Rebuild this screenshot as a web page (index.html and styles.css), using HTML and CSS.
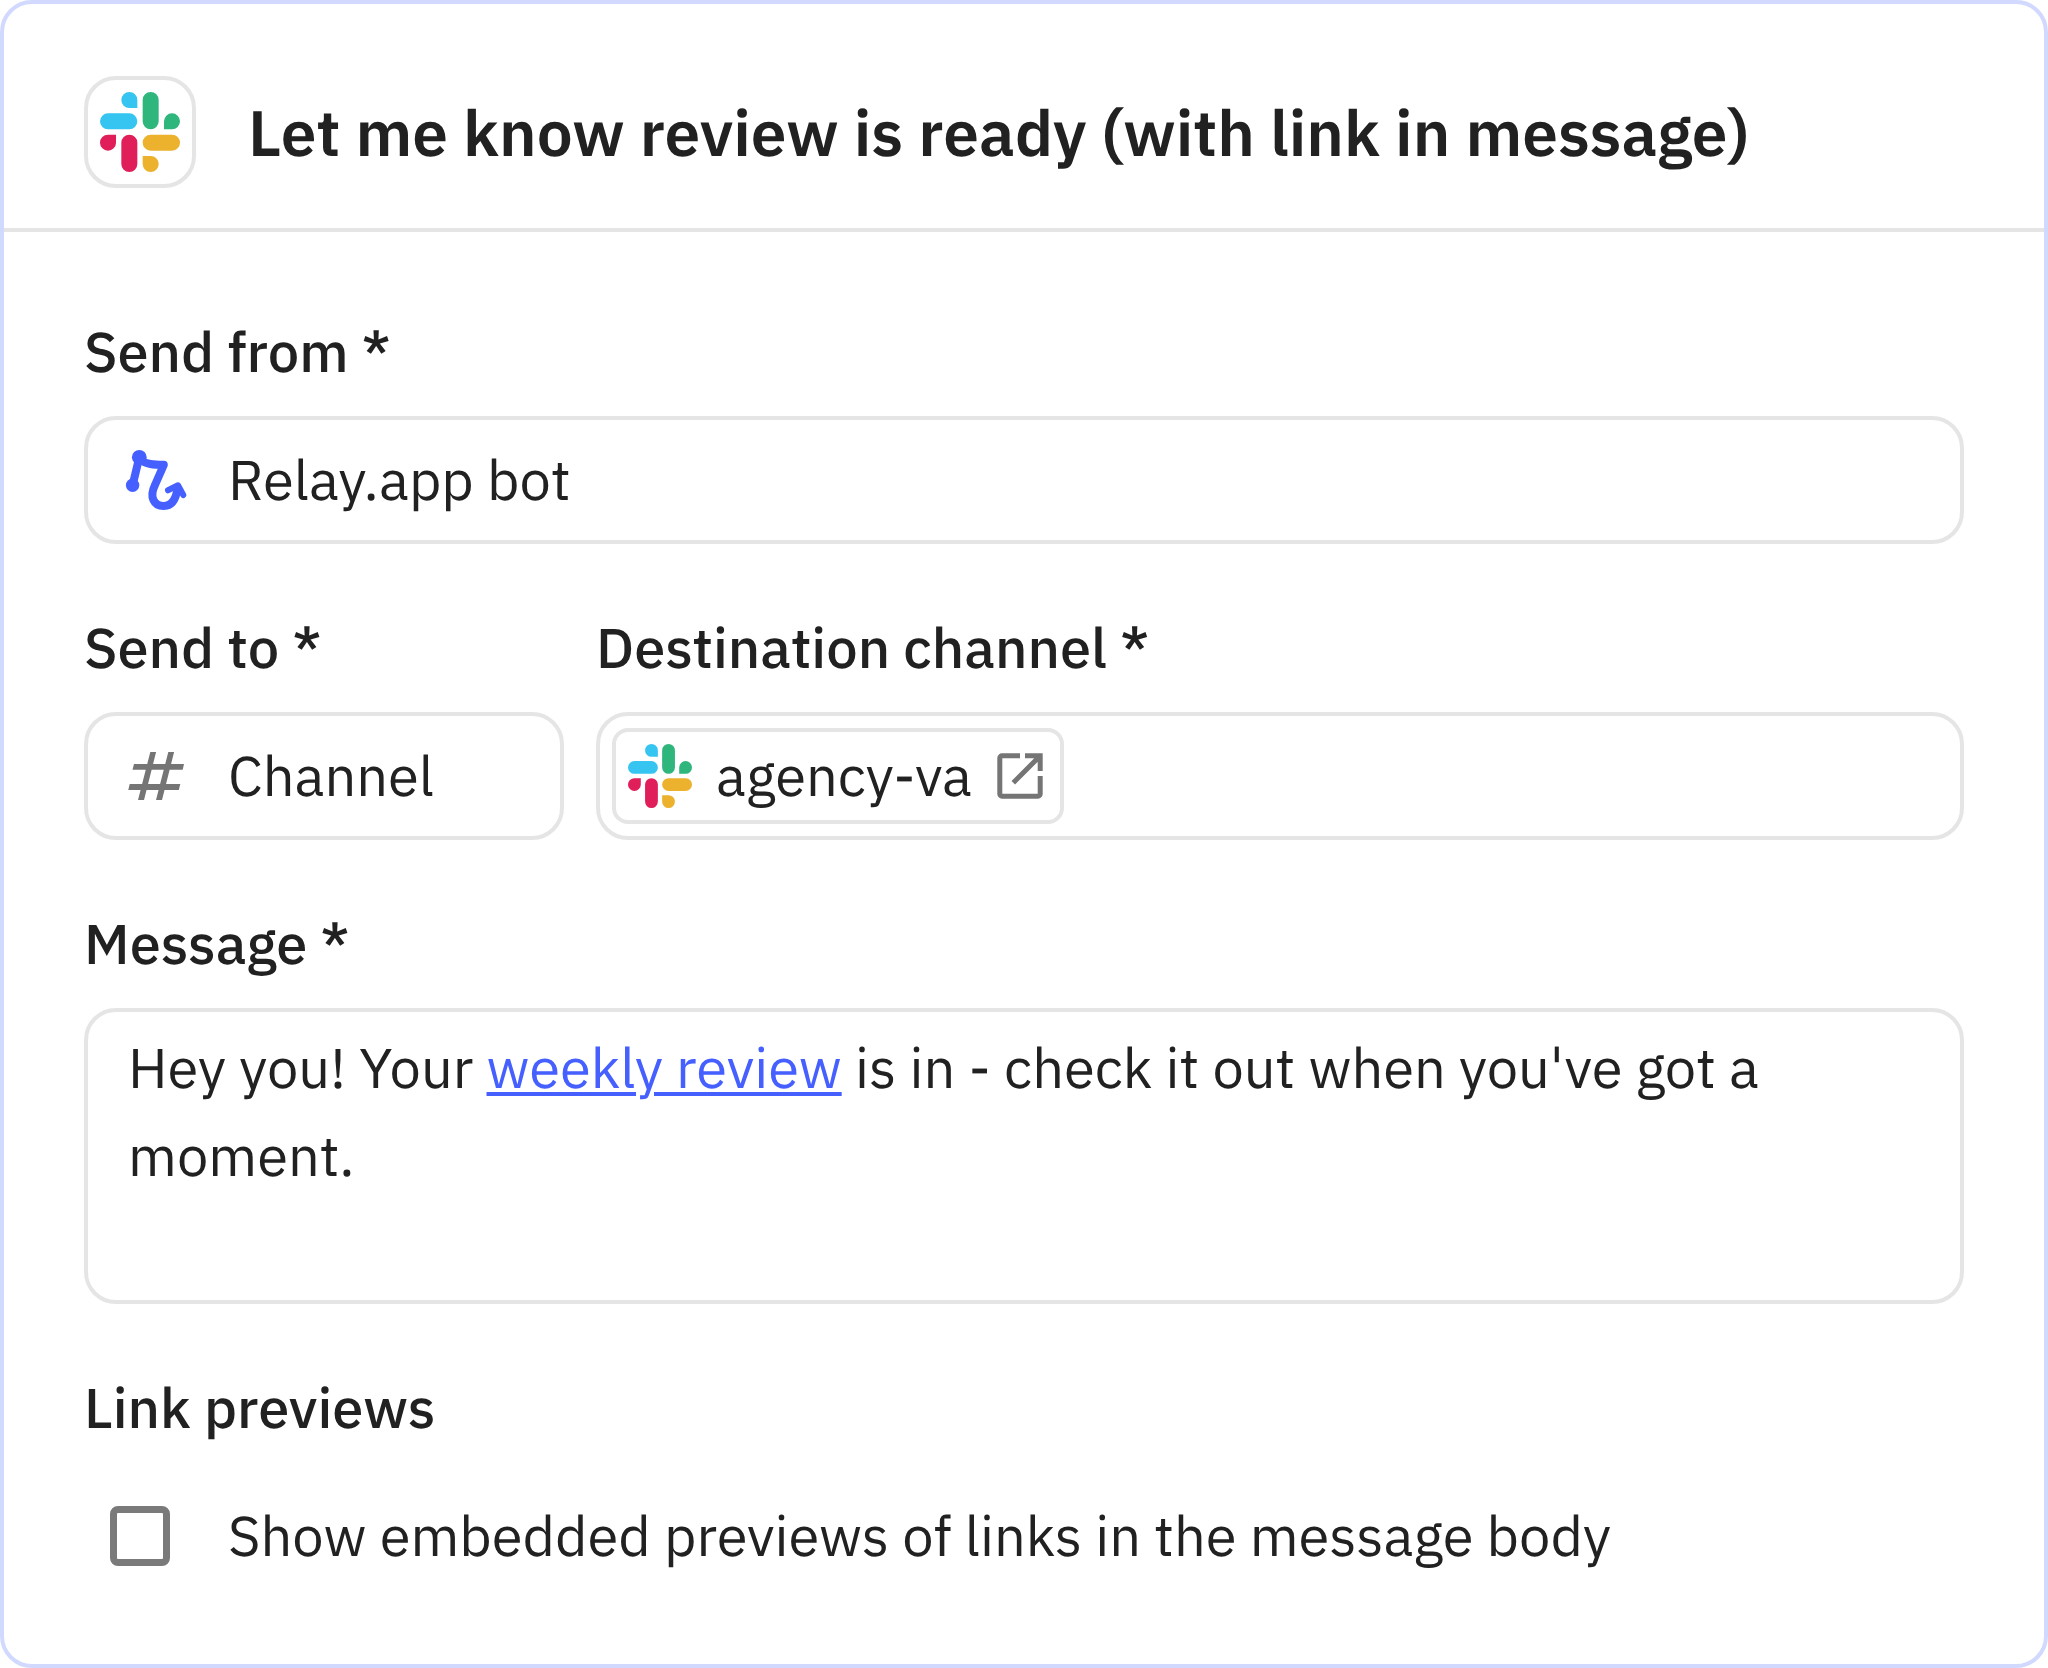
FILE: index.html
```html
<!DOCTYPE html>
<html lang="en">
<head>
    <meta charset="UTF-8">
    <meta name="viewport" content="width=device-width, initial-scale=1.0">
    <title>Let me know review is ready</title>
    <link rel="stylesheet" href="styles.css">
</head>
<body>

    <!-- Slack mark, shared by the header and the channel chip -->
    <svg class="sprite" aria-hidden="true">
        <symbol id="slack" viewBox="0 0 60 60">
            <path fill="#36c5f0" d="M28 12h-6a6 6 0 1 1 6-6zM6 16h16a6 6 0 0 1 0 12H6a6 6 0 0 1 0-12z"/>
            <path fill="#2eb67d" d="M48 28v-6a6 6 0 1 1 6 6zM44 6v16a6 6 0 0 1-12 0V6a6 6 0 0 1 12 0z"/>
            <path fill="#ecb22e" d="M32 48h6a6 6 0 1 1-6 6zM54 44H38a6 6 0 0 1 0-12h16a6 6 0 0 1 0 12z"/>
            <path fill="#e01e5a" d="M12 32v6a6 6 0 1 1-6-6zM16 54V38a6 6 0 0 1 12 0v16a6 6 0 0 1-12 0z"/>
        </symbol>
    </svg>

    <form class="card">
        <header class="card-header">
            <div class="app-icon">
                <svg class="app-logo"><use href="#slack"/></svg>
            </div>
            <h1>Let me know review is ready (with link in message)</h1>
        </header>

        <div class="card-body">
            <div class="field">
                <label for="send-from">Send from *</label>
                <div class="control">
                    <svg class="icon" viewBox="0 0 64 64" fill="none" stroke="#4560ff" stroke-width="8" stroke-linecap="round" stroke-linejoin="round" aria-hidden="true">
                        <circle cx="15.3" cy="9.3" r="7.4" fill="#4560ff" stroke="none"/>
                        <circle cx="8.6" cy="37.3" r="6.7" fill="#4560ff" stroke="none"/>
                        <path d="M15.3 9.3 8.6 37.3"/>
                        <path d="M15.3 11C22 16.500 30 16.800 39.800 16.800L31 37C25 49 30 58 39.500 58C47 58 52 52 53.500 40"/>
                        <path stroke-width="6" d="M44 42.300 54 37.300 59.300 47"/>
                    </svg>
                    <select id="send-from">
                        <option>Relay.app bot</option>
                    </select>
                </div>
            </div>

            <div class="field-row">
                <div class="field field-type">
                    <label for="send-to">Send to *</label>
                    <div class="control">
                        <svg class="icon" viewBox="0 0 64 64" fill="#757575" aria-hidden="true">
                            <path d="M10 20h50l-1.300 5.800H8.500zM5.700 40h50.600l-1.500 6H4.300zM26.300 8h5.800L20 56h-6zM44.300 8h5.800L38 56h-6z"/>
                        </svg>
                        <select id="send-to">
                            <option>Channel</option>
                        </select>
                    </div>
                </div>

                <div class="field field-channel" role="group" aria-labelledby="channel-label">
                    <span class="label" id="channel-label">Destination channel *</span>
                    <div class="control control-chips">
                        <a class="chip" href="#">
                            <svg class="icon"><use href="#slack"/></svg>
                            <span>agency-va</span>
                            <svg class="icon-open" viewBox="0 0 60 60" fill="none" stroke="#757575" stroke-width="5" aria-hidden="true">
                                <path d="M30 9.800H12a2.200 2.200 0 0 0-2.200 2.200V48a2.200 2.200 0 0 0 2.200 2.200H48a2.200 2.200 0 0 0 2.200-2.200V30"/>
                                <path d="M35 9.800H50.200V25M23.300 36.700 50.200 9.800"/>
                            </svg>
                        </a>
                    </div>
                </div>
            </div>

            <div class="field">
                <span class="label" id="message-label">Message *</span>
                <div class="message" role="textbox" aria-multiline="true" aria-labelledby="message-label" contenteditable="true" spellcheck="false">Hey you! Your <a href="#">weekly review</a> is in - check it out when you've got a moment.</div>
            </div>

            <div class="field">
                <span class="label">Link previews</span>
                <div class="check-row">
                    <input type="checkbox" id="previews">
                    <label for="previews">Show embedded previews of links in the message body</label>
                </div>
            </div>
        </div>
    </form>

</body>
</html>
```
FILE: styles.css
```css
* {
    margin: 0;
    padding: 0;
    box-sizing: border-box;
}

body {
    background: #ffffff;
    color: #212121;
    font-family: 'IBM Plex Sans', 'Noto Sans', sans-serif;
    font-size: 56px;
    line-height: 88px;
    text-rendering: geometricPrecision;
}

.sprite {
    display: none;
}

.card {
    border: 4px solid #d1d9ff;
    border-radius: 32px;
}

/* Header */
.card-header {
    display: flex;
    align-items: center;
    gap: 52px;
    padding: 72px 80px 40px;
    border-bottom: 4px solid #e5e5e5;
}

.app-icon {
    display: flex;
    align-items: center;
    justify-content: center;
    width: 112px;
    height: 112px;
    border: 4px solid #e5e5e5;
    border-radius: 32px;
}

.app-logo {
    width: 80px;
    height: 80px;
}

h1 {
    font-size: 64px;
    font-weight: 600;
}

/* Fields */
.card-body {
    display: flex;
    flex-direction: column;
    gap: 64px;
    padding: 80px 80px 64px;
}

.field {
    display: flex;
    flex-direction: column;
    gap: 24px;
}

.field > label,
.label {
    font-weight: 500;
    line-height: 80px;
}

.field-row {
    display: flex;
    gap: 32px;
}

.field-type {
    width: 480px;
}

.field-channel {
    flex: 1;
}

.control {
    display: flex;
    align-items: center;
    gap: 40px;
    height: 128px;
    padding: 0 36px;
    border: 4px solid #e5e5e5;
    border-radius: 32px;
}

.control select {
    flex: 1;
    min-width: 0;
    appearance: none;
    border: none;
    outline: none;
    background: transparent;
    color: inherit;
    font: inherit;
    text-rendering: inherit;
}

.icon {
    flex: none;
    width: 64px;
    height: 64px;
}

.control-chips {
    padding: 0 12px;
}

.chip {
    display: flex;
    align-items: center;
    height: 96px;
    padding: 0 10px 0 12px;
    border: 4px solid #e5e5e5;
    border-radius: 16px;
    color: inherit;
    text-decoration: none;
}

.chip span {
    padding: 0 18px 0 24px;
}

.icon-open {
    width: 60px;
    height: 60px;
}

.message {
    min-height: 296px;
    padding: 12px 40px;
    border: 4px solid #e5e5e5;
    border-radius: 32px;
    outline: none;
}

.message a {
    color: #4560ff;
    text-decoration-thickness: 4px;
    text-underline-offset: 4px;
}

/* Checkbox */
.check-row {
    display: flex;
    align-items: center;
    gap: 32px;
    min-height: 128px;
}

.check-row input {
    appearance: none;
    width: 60px;
    height: 60px;
    margin: 0 26px;
    border: 7px solid #7a7a7a;
    border-radius: 8px;
}
```
